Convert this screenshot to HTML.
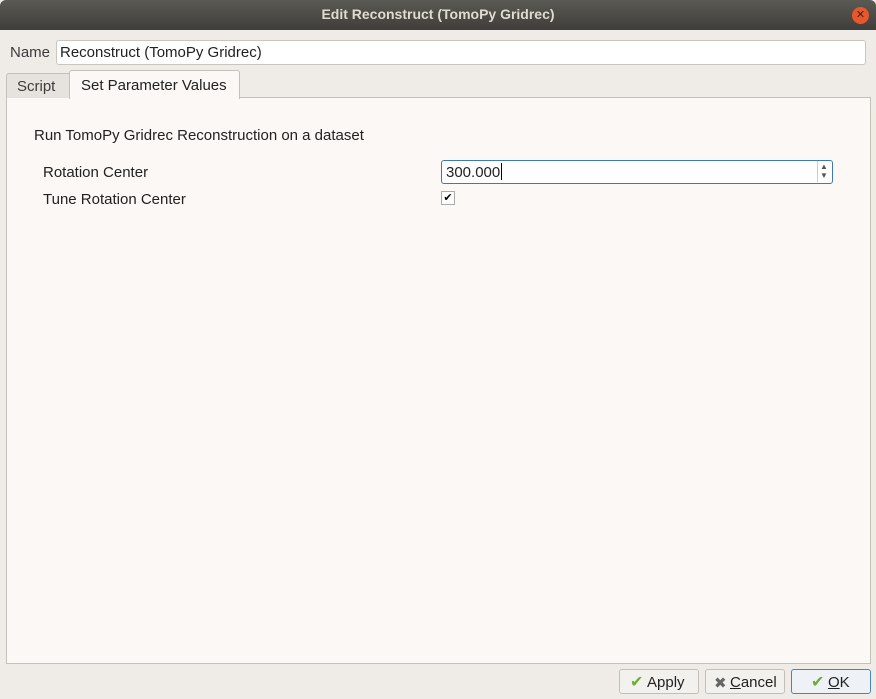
<!DOCTYPE html><html><head><style>
body{margin:0;width:876px;height:699px;background:#efece8;font-family:"Liberation Sans",sans-serif;font-size:15px;color:#3c3c3c;position:relative;overflow:hidden}
.a{position:absolute}
</style></head><body>
<div class="a" style="left:0;top:0;width:876px;height:30px;background:linear-gradient(#5a5953,#3f3e3a);border-radius:6px 6px 0 0"></div>
<div class="a" style="left:0;top:6px;width:876px;text-align:center;color:#dfdbd2;font-weight:bold;font-size:14px">Edit Reconstruct (TomoPy Gridrec)</div>
<div class="a" style="left:852px;top:7px;width:17px;height:17px;border-radius:50%;background:#e8572c;color:#4a2010;font-size:11px;text-align:center;line-height:17px">✕</div>
<div class="a" style="left:10px;top:44px">Name</div>
<div class="a" style="left:56px;top:40px;width:808px;height:23px;background:#fff;border:1px solid #c9c5bf;border-radius:3px"></div>
<div class="a" style="left:60px;top:44px;color:#222">Reconstruct (TomoPy Gridrec)</div>
<div class="a" style="left:6px;top:97px;width:863px;height:565px;background:#fbf8f5;border:1px solid #c4c0ba"></div>
<div class="a" style="left:6px;top:73px;width:63px;height:24px;background:#e6e3df;border:1px solid #c4c0ba;border-bottom:none;border-radius:3px 0 0 0"></div>
<div class="a" style="left:17px;top:78px">Script</div>
<div class="a" style="left:69px;top:70px;width:169px;height:28px;background:#fbf8f5;border:1px solid #c4c0ba;border-bottom:none;border-radius:3px 3px 0 0"></div>
<div class="a" style="left:81px;top:77px;color:#222">Set Parameter Values</div>
<div class="a" style="left:34px;top:127px;color:#222">Run TomoPy Gridrec Reconstruction on a dataset</div>
<div class="a" style="left:43px;top:164px;color:#222">Rotation Center</div>
<div class="a" style="left:43px;top:191px;color:#222">Tune Rotation Center</div>
<div class="a" style="left:441px;top:160px;width:390px;height:22px;background:#fff;border:1px solid #3d7ab5;border-radius:3px"></div>
<div class="a" style="left:446px;top:164px;color:#222">300.000</div>
<div class="a" style="left:501px;top:163px;width:1px;height:17px;background:#000"></div>
<div class="a" style="left:817px;top:161px;width:1px;height:21px;background:#ccc"></div>
<div class="a" style="left:820px;top:162px;font-size:8px;color:#555;line-height:9px">▲<br>▼</div>
<div class="a" style="left:441px;top:191px;width:12px;height:12px;background:#fff;border:1px solid #aaa;font-size:11px;line-height:12px;text-align:center;color:#000">✔</div>
<div class="a" style="left:619px;top:669px;width:78px;height:23px;background:#f3f1ee;border:1px solid #c2beb8;border-radius:3px"></div>
<div class="a" style="left:630px;top:672px;color:#6cae35;font-size:16px">✔</div><div class="a" style="left:647px;top:674px;color:#222">Apply</div>
<div class="a" style="left:705px;top:669px;width:78px;height:23px;background:#f3f1ee;border:1px solid #c2beb8;border-radius:3px"></div>
<div class="a" style="left:714px;top:674px;color:#666">✖</div><div class="a" style="left:730px;top:674px;color:#222"><u>C</u>ancel</div>
<div class="a" style="left:791px;top:669px;width:78px;height:23px;background:#eef2f6;border:1px solid #4a84bd;border-radius:3px"></div>
<div class="a" style="left:811px;top:672px;color:#6cae35;font-size:16px">✔</div><div class="a" style="left:828px;top:674px;color:#222"><u>O</u>K</div>
</body></html>
